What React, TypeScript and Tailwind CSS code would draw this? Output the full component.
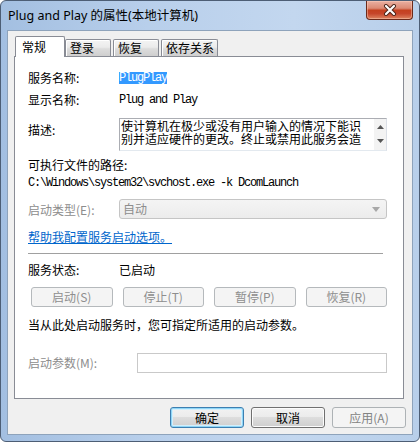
import React from "react";

const MONO = "font-['Liberation_Mono','Noto_Sans_CJK_SC',monospace] text-[12px] tracking-[-1.2px]";

function CloseButton() {
  return (
    <div className="w-[47px] h-[19px] rounded-b-[4px] border border-t-0 border-[#6b2a1b] bg-[linear-gradient(180deg,#eab0a2_0%,#dc8a74_40%,#c4401f_52%,#c6452a_70%,#dd8461_100%)] shadow-[inset_0_0_0_1px_rgba(255,210,190,0.45)] flex items-center justify-center">
      <svg width="14" height="12" viewBox="0 0 14 12">
        <path d="M3 2 L11 10 M11 2 L3 10" stroke="#4a2418" strokeWidth="4" strokeLinecap="round" />
        <path d="M3 2 L11 10 M11 2 L3 10" stroke="#ffffff" strokeWidth="2.2" strokeLinecap="round" />
      </svg>
    </div>
  );
}

function Tab({ label, w }: { label: string; w: string }) {
  return (
    <div
      className={`${w} h-[17px] border border-b-0 border-[#898c95] rounded-t-[2px] bg-[linear-gradient(180deg,#f4f4f4_0%,#ebebeb_45%,#dcdcdc_55%,#cfcfcf_100%)] shadow-[inset_1px_1px_0_#ffffff] pl-[4px] leading-[16px] whitespace-nowrap`}
    >
      {label}
    </div>
  );
}

function DisabledButton({ label }: { label: string }) {
  return (
    <div className="h-[20px] border border-[#b5b9bc] rounded-[3px] bg-[#f4f4f4] text-[#8e8e8e] text-center leading-[18px] whitespace-nowrap">
      {label}
    </div>
  );
}

export default function App() {
  return (
    <div className="w-[420px] h-[442px] bg-white">
      <div className="w-[420px] h-[442px] flex flex-col border border-[#4d5e75] rounded-[6px] bg-[linear-gradient(90deg,#a3bfe1_0%,#b8cfeb_35%,#c3d7ef_70%,#b8cfea_100%)] font-['Noto_Sans','Noto_Sans_CJK_SC',sans-serif] text-[12px] text-black">
        {/* Title bar */}
        <div className="h-[29px] flex items-start justify-between pl-[7px] pr-[6px]">
          <div className="pt-[7px] leading-[16px] text-[12.5px] whitespace-nowrap">
            Plug and Play 的属性(本地计算机)
          </div>
          <CloseButton />
        </div>

        {/* Client area */}
        <div className="mx-[6px] mb-[6px] flex-1 border border-[#8ea3bb] bg-[#f0f0f0] flex flex-col pl-[6px] pr-[8px] pt-[5px] font-['Noto_Sans_CJK_SC',sans-serif]">
          {/* Tabs */}
          <div className="flex items-end h-[20px] pl-[1px]">
            <div className="relative z-10 -mb-px w-[50px] h-[21px] bg-white border border-b-0 border-[#898c95] rounded-t-[2px] pl-[6px] pt-[2px] leading-[16px]">
              常规
            </div>
            <div className="flex items-end gap-[2px]">
              <Tab label="登录" w="w-[46px]" />
              <Tab label="恢复" w="w-[46px]" />
              <Tab label="依存关系" w="w-[57px]" />
            </div>
          </div>

          {/* Panel */}
          <div className="h-[343px] border border-[#898c95] bg-white pl-[13px] pr-[16px] pt-[13px] flex flex-col">
            <div className="flex items-center h-[16px]">
              <div className="w-[91px] leading-[16px]">服务名称:</div>
              <span className={`${MONO} bg-[#3399ff] text-white leading-[12px] h-[12px]`}>PlugPlay</span>
            </div>
            <div className="flex items-center h-[16px] mt-[6px]">
              <div className="w-[91px] leading-[16px]">显示名称:</div>
              <span className={`${MONO} leading-[12px]`}>Plug and Play</span>
            </div>
            <div className="flex items-start mt-[10px]">
              <div className="w-[91px] pt-[4px] leading-[16px]">描述:</div>
              <div className="flex-1 h-[33px] border border-[#abadb3] border-b-[#e3e9ef] border-r-[#dbdfe6] flex overflow-hidden">
                <div className="flex-1 pl-[1px] leading-[13px] whitespace-nowrap">
                  <div>使计算机在极少或没有用户输入的情况下能识</div>
                  <div>别并适应硬件的更改。终止或禁用此服务会造</div>
                </div>
                <div className="w-[12px] bg-[#f3f3f3] flex flex-col items-center justify-between pt-[6px] pb-[7px]">
                  <svg width="7" height="4" viewBox="0 0 7 4">
                    <path d="M0 4 L3.5 0 L7 4 Z" fill="#555" />
                  </svg>
                  <svg width="7" height="4" viewBox="0 0 7 4">
                    <path d="M0 0 L7 0 L3.5 4 Z" fill="#555" />
                  </svg>
                </div>
              </div>
            </div>
            <div className="h-[16px] mt-[6px] leading-[16px]">可执行文件的路径:</div>
            <div className={`${MONO} h-[16px] mt-[2px] leading-[16px] whitespace-nowrap`}>
              C:\Windows\system32\svchost.exe -k DcomLaunch
            </div>
            <div className="flex items-center mt-[8px]">
              <div className="w-[91px] leading-[16px] text-[#8d8d8d] pt-[2px]">启动类型(E):</div>
              <div className="flex-1 h-[20px] border border-[#c5c5c5] rounded-[3px] bg-[linear-gradient(180deg,#f4f4f4,#ececec)] flex items-center justify-between pl-[3px] pr-[6px]">
                <span className="text-[#8d8d8d] leading-[16px]">自动</span>
                <svg width="8" height="5" viewBox="0 0 8 5">
                  <path d="M0 0 L8 0 L4 5 Z" fill="#a8a8a8" />
                </svg>
              </div>
            </div>
            <div className="h-[16px] mt-[10px] leading-[16px]">
              <span className="text-[#0066cc] underline">帮助我配置服务启动选项。</span>
            </div>
            <div className="mt-[8px] mr-[4px] h-0 border-t border-[#a0a0a0]" />
            <div className="flex items-center h-[16px] mt-[8px]">
              <div className="w-[91px] leading-[16px]">服务状态:</div>
              <div className="leading-[16px]">已启动</div>
            </div>
            <div className="grid grid-cols-4 gap-[10px] ml-[3px] mt-[9px]">
              <DisabledButton label="启动(S)" />
              <DisabledButton label="停止(T)" />
              <DisabledButton label="暂停(P)" />
              <DisabledButton label="恢复(R)" />
            </div>
            <div className="h-[16px] mt-[10px] leading-[16px] whitespace-nowrap">
              当从此处启动服务时，您可指定所适用的启动参数。
            </div>
            <div className="flex items-center mt-[20px]">
              <div className="w-[109px] leading-[16px] text-[#8d8d8d]">启动参数(M):</div>
              <div className="flex-1 h-[20px] border border-[#c9c9c9] bg-white" />
            </div>
          </div>

          {/* Bottom buttons */}
          <div className="flex justify-end gap-[7px] mt-[8px] -mr-[2px]">
            <div className="w-[74px] h-[21px] border border-[#3c7fb1] rounded-[3px] bg-[linear-gradient(180deg,#f2f2f2_0%,#ebebeb_50%,#dddddd_50%,#cfcfcf_100%)] shadow-[inset_0_0_0_1px_#8fd6f7,inset_0_0_0_2px_#d3effc] text-center leading-[19px]">
              确定
            </div>
            <div className="w-[74px] h-[21px] border border-[#707070] rounded-[3px] bg-[linear-gradient(180deg,#f2f2f2_0%,#ebebeb_50%,#dddddd_50%,#cfcfcf_100%)] shadow-[inset_0_0_0_1px_#fcfcfc] text-center leading-[19px]">
              取消
            </div>
            <div className="w-[74px] h-[21px] border border-[#adb2b5] rounded-[3px] bg-[#f4f4f4] text-[#838383] text-center leading-[19px]">
              应用(A)
            </div>
          </div>
        </div>
      </div>
    </div>
  );
}
